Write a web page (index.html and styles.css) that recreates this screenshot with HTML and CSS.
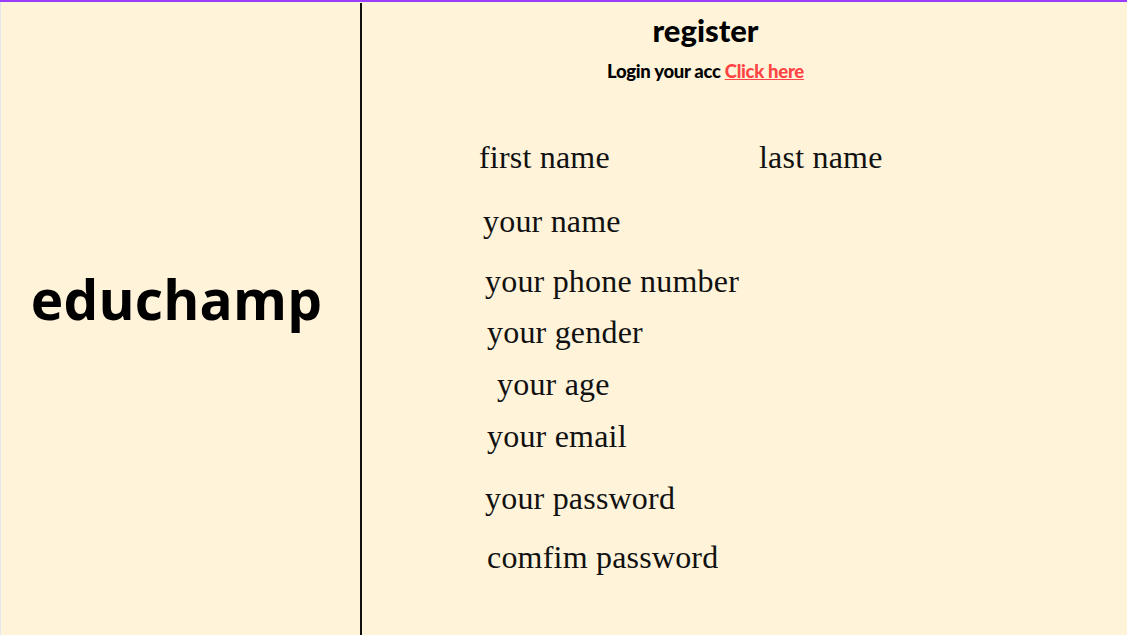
FILE: index.html
```html
<!DOCTYPE html>
<html>
<head>
<meta charset="utf-8">
<link rel="stylesheet" href="styles.css">
</head>
<body>
<div class="page">
  <aside class="brand">
    <h1 class="brand-name">educhamp</h1>
  </aside>
  <main class="panel">
    <header class="head">
      <h2 class="title">register</h2>
      <p class="login">Login your acc <a class="login-link" href="#">Click here</a></p>
    </header>
    <form class="form">
      <div class="row row-names">
        <span class="field">first name</span>
        <span class="field">last name</span>
      </div>
      <div class="row row-name"><span class="field">your name</span></div>
      <div class="row row-phone"><span class="field">your phone number</span></div>
      <div class="row row-gender"><span class="field">your gender</span></div>
      <div class="row row-age"><span class="field">your age</span></div>
      <div class="row row-email"><span class="field">your email</span></div>
      <div class="row row-pass"><span class="field">your password</span></div>
      <div class="row row-confirm"><span class="field">comfim password</span></div>
    </form>
  </main>
</div>
</body>
</html>
```
FILE: styles.css
```css
* { box-sizing: border-box; }
html, body { margin: 0; padding: 0; }
body {
  background: #fff4da;
  border-top: 2px solid #9a3dff;
  height: 635px;
  overflow: hidden;
}
.page {
  display: flex;
  height: 633px;
  border-left: 1px solid #e3e6ee;
}
.brand {
  width: 359px;
  display: flex;
  align-items: center;
  justify-content: center;
  padding-right: 8px;
  padding-bottom: 40px;
}
.brand-name {
  margin: 0;
  font-family: "Open Sans", sans-serif;
  font-weight: 700;
  font-size: 55px;
  color: #000;
  letter-spacing: 0.2px;
}
.panel {
  flex: 1;
  border-left: 2px solid #111;
  margin-top: 1px;
  display: flex;
  flex-direction: column;
}
.head {
  display: flex;
  flex-direction: column;
  align-items: center;
  padding-right: 78px;
  padding-top: 9px;
}
.title {
  margin: 0;
  font-family: "Lato", sans-serif;
  font-weight: 900;
  font-size: 31px;
  line-height: 36px;
  color: #000;
}
.login {
  margin: 12px 0 0;
  font-family: "Lato", sans-serif;
  font-weight: 900;
  font-size: 18.5px;
  line-height: 22px;
  color: #000;
  letter-spacing: -0.3px;
}
.login-link {
  color: #ff4444;
  text-decoration: underline;
}
.form {
  display: flex;
  flex-direction: column;
  padding-left: 117px;
  margin-top: 57px;
}
.row {
  font-family: "Liberation Serif", serif;
  font-size: 32px;
  line-height: 36px;
  color: #111;
  letter-spacing: 0.2px;
}
.row-names {
  display: grid;
  grid-template-columns: 280px auto;
  height: 64px;
}
.row-name { height: 60px; padding-left: 4px; }
.row-phone { height: 51px; padding-left: 6px; }
.row-gender { height: 52px; padding-left: 8px; }
.row-age { height: 52px; padding-left: 18px; }
.row-email { height: 62px; padding-left: 8px; }
.row-pass { height: 59px; padding-left: 6px; }
.row-confirm { height: 40px; padding-left: 8px; }
```
